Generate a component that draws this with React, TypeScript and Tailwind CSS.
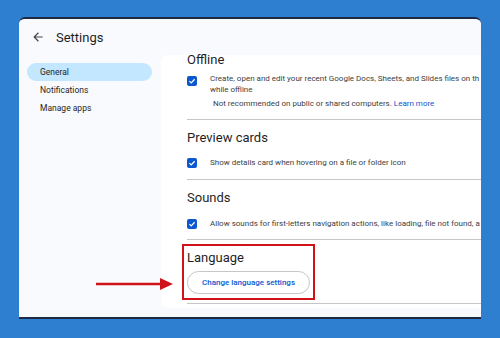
import React from "react";

const font = { fontFamily: "Roboto, 'Noto Sans', sans-serif" };

function Check() {
  return (
    <div className="w-[10px] h-[10px] shrink-0 rounded-[2px] bg-[#0b57d0] flex items-center justify-center">
      <svg width="8" height="8" viewBox="0 0 10 10">
        <path d="M1.8 5.2 L4 7.3 L8.3 2.8" stroke="white" strokeWidth="1.6" fill="none" />
      </svg>
    </div>
  );
}

function Divider({ mt }: { mt: string }) {
  return <div className={`h-px bg-[#c4c7c5] ${mt}`} />;
}

export default function App() {
  return (
    <div className="w-[500px] h-[338px] bg-[#2f7fd0] pt-[17px] pl-[19px] overflow-hidden" style={font}>
      <div className="w-[462px] h-[302px] bg-[#f8fafd] rounded-t-[6px] border-t-2 border-b-2 border-[#1e2a45] overflow-hidden flex flex-col relative">
        {/* header */}
        <div className="h-[36px] shrink-0 flex items-center pl-[12px] gap-[11px]">
          <svg width="14" height="14" viewBox="0 0 24 24" className="text-[#444746]">
            <path d="M20 11H7.83l5.59-5.59L12 4l-8 8 8 8 1.41-1.41L7.83 13H20v-2z" fill="currentColor" />
          </svg>
          <span className="text-[13px] text-[#1f1f1f] leading-none">Settings</span>
        </div>
        <div className="flex flex-1">
          {/* sidebar */}
          <div className="w-[142px] shrink-0 pt-[8px] pl-[8px] flex flex-col text-[8.5px] text-[#1f1f1f]">
            <div className="w-[125px] h-[18px] rounded-full bg-[#c2e7ff] flex items-center pl-[13px]">General</div>
            <div className="h-[18px] flex items-center pl-[13px]">Notifications</div>
            <div className="h-[18px] flex items-center pl-[13px]">Manage apps</div>
          </div>
          {/* content */}
          <div className="flex-1 bg-white rounded-l-[8px] mb-[9px] pl-[26px] flex flex-col whitespace-nowrap text-[#1f1f1f]">
            <div className="mt-[-3px] h-[16px] leading-[16px] text-[13px]">Offline</div>
            <div className="mt-[5px] flex items-start gap-[13px] text-[8px] leading-[11px] text-[#3c4043]">
              <div className="mt-[3px]"><Check /></div>
              <div>
                <div>Create, open and edit your recent Google Docs, Sheets, and Slides files on th</div>
                <div>while offline</div>
                <div className="mt-[3px] ml-[3px]">
                  Not recommended on public or shared computers. <span className="text-[#0b57d0]">Learn more</span>
                </div>
              </div>
            </div>
            <Divider mt="mt-[10px]" />
            <div className="mt-[10px] h-[16px] leading-[16px] text-[13px]">Preview cards</div>
            <div className="mt-[11px] flex items-center gap-[13px] text-[8px] leading-[11px] text-[#3c4043]">
              <Check />
              <div>Show details card when hovering on a file or folder icon</div>
            </div>
            <Divider mt="mt-[11px]" />
            <div className="mt-[10px] h-[16px] leading-[16px] text-[13px]">Sounds</div>
            <div className="mt-[12px] flex items-center gap-[13px] text-[8px] leading-[11px] text-[#3c4043]">
              <Check />
              <div>Allow sounds for first-letters navigation actions, like loading, file not found, a</div>
            </div>
            <Divider mt="mt-[10px]" />
            <div className="relative">
              <div className="mt-[10px] h-[16px] leading-[16px] text-[13px]">Language</div>
              <div className="mt-[5px] w-[123px] h-[23px] rounded-full border border-[#c4c7c5] flex items-center justify-center text-[8px] font-medium text-[#0b57d0]">
                Change language settings
              </div>
              <div className="absolute left-[-5px] top-[4px] w-[133px] h-[56px] border-2 border-[#d0121b]" />
            </div>
            <Divider mt="mt-[9px]" />
          </div>
        </div>
        {/* arrow */}
        <svg className="absolute left-[77px] top-[257px]" width="80" height="16" viewBox="0 0 80 16">
          <line x1="0" y1="8" x2="66" y2="8" stroke="#d0121b" strokeWidth="2.5" />
          <polygon points="64,2 77,8 64,14" fill="#d0121b" />
        </svg>
      </div>
    </div>
  );
}
